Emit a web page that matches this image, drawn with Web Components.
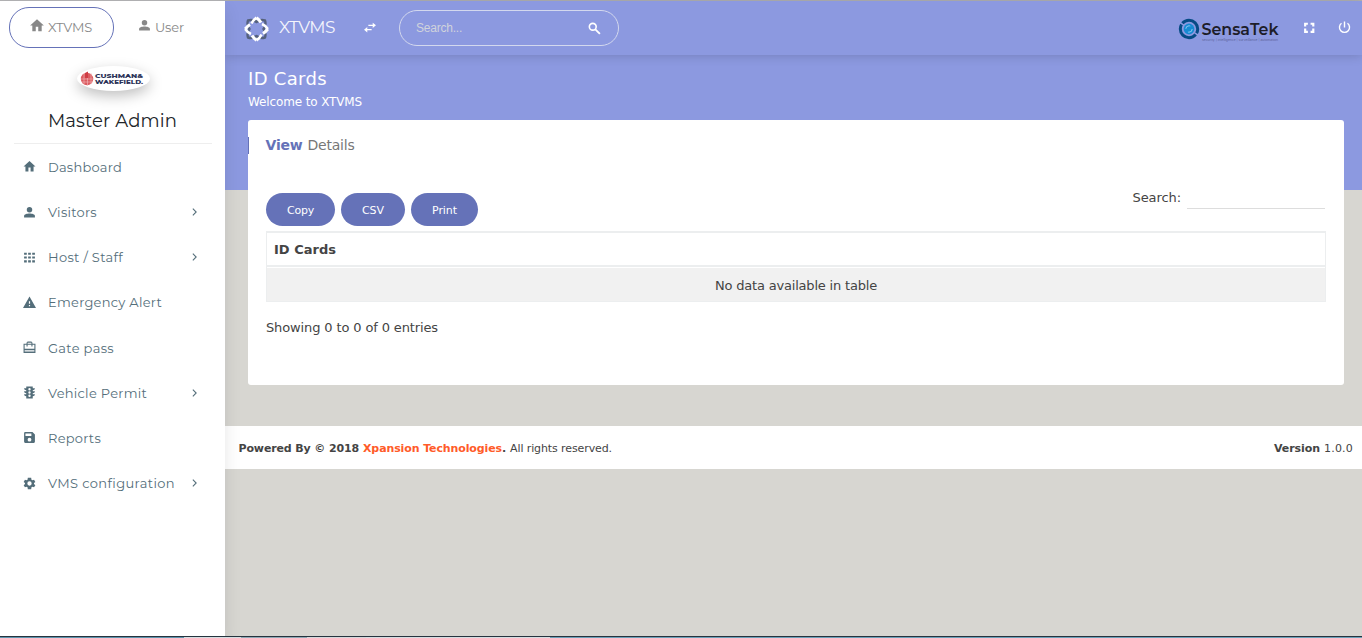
<!DOCTYPE html>
<html lang="en">
<head>
<meta charset="utf-8">
<title>XTVMS - ID Cards</title>
<style>
    html, body {
        height: 100%;
    }

    body {
        margin: 0;
        overflow: hidden;
        font-family: Verdana, "DejaVu Sans", sans-serif;
        font-size: 13px;
        color: #444;
        background: #d7d6d1;
    }
</style>
</head>
<body>
<vms-app>
    <vms-sidebar slot="sidebar"></vms-sidebar>
    <vms-topbar slot="main"></vms-topbar>
    <vms-page slot="main" heading="ID Cards" sub="Welcome to XTVMS">
        <vms-card>
            <fit-text slot="strong" w="37">View</fit-text>
            <fit-text slot="title" w="47">Details</fit-text>
            <vms-table></vms-table>
        </vms-card>
    </vms-page>
    <vms-footer slot="main"></vms-footer>
</vms-app>

<script>
const ICONS = {
    home: '<path d="M10 21v-7h4v7h5.500v-9H23L12 2 1 12h3.500v9z"/>',
    user: '<circle cx="12" cy="7" r="5"/><path d="M2 21v-2.500c0-3 6-4.500 10-4.500s10 1.500 10 4.500V21z"/>',
    apps: '<path d="M2 3h5v4H2zM9.500 3h5v4h-5zM17 3h5v4h-5zM2 10h5v4H2zM9.500 10h5v4h-5zM17 10h5v4h-5zM2 17h5v4H2zM9.500 17h5v4h-5zM17 17h5v4h-5z"/>',
    alert: '<path fill-rule="evenodd" d="M0 22h24L12 1zM10.900 9.500h2.200v5h-2.200zM10.900 16.500h2.200v2.500h-2.200z"/>',
    caseIcon: '<path fill-rule="evenodd" d="M17.500 5V3l-2-2h-7l-2 2v2H1v17h22V5zM8.500 3h7v2h-7zM3 7h3.500v3h2V7h7v3h2V7H21v7.500H3zM3 17h18v2.500H3z"/>',
    traffic: '<path fill-rule="evenodd" d="M22 9.500h-4V8c2.200-.5 4-2 4-4h-4V1H6v3H2c0 2 1.800 3.500 4 4v1.500H2c0 2 1.800 3.500 4 4V15H2c0 2 1.800 3.500 4 4v4h12v-4c2.200-.5 4-2 4-4h-4v-1.500c2.200-.5 4-2 4-4zM12 3.700a2.200 2.200 0 1 1 0 4.400 2.200 2.200 0 0 1 0-4.400zM12 9.800a2.200 2.200 0 1 1 0 4.400 2.200 2.200 0 0 1 0-4.400zM12 15.900a2.200 2.200 0 1 1 0 4.400 2.200 2.200 0 0 1 0-4.400z"/>',
    save: '<path fill-rule="evenodd" d="M17.500 2H4a2 2 0 0 0-2 2v16a2 2 0 0 0 2 2h16a2 2 0 0 0 2-2V6.500zM12 19.500a3.500 3.500 0 1 1 0-7 3.500 3.500 0 0 1 0 7zM15.500 9H4.500V4.500h11z"/>',
    gear: '<path fill-rule="evenodd" d="M20.300 13.100a8 8 0 0 0 0-2.200l2.500-1.900-2.400-4.100-2.900 1.200a8 8 0 0 0-1.900-1.100L15.100 1.500H8.900l-.5 3.500a8 8 0 0 0-1.900 1.100L3.600 4.900 1.200 9l2.500 1.900a8 8 0 0 0 0 2.200L1.200 15l2.400 4.100 2.900-1.200a8 8 0 0 0 1.900 1.100l.5 3.500h6.200l.5-3.500a8 8 0 0 0 1.900-1.100l2.900 1.200 2.400-4.100zM12 16a4 4 0 1 1 0-8 4 4 0 0 1 0 8z"/>',
    chevron: '<path d="M8 4l8 8-8 8" fill="none" stroke="currentColor" stroke-width="2.600"/>',
    swap: '<path d="M1 16l6-5v3.700h8v2.600H7V21zM23 8l-6-5v3.700H9v2.600h8V13z"/>',
    search: '<circle cx="8.800" cy="8.800" r="6.300" fill="none" stroke="currentColor" stroke-width="3"/><path d="M13.500 13.500L22 22" stroke="currentColor" stroke-width="3.500"/>',
    full: '<path d="M2 3h7v4H6v3H2zM14 3h7v7h-4V7h-3zM2 14h4v4h3v4H2zM17 14h4v8h-7v-4h3z"/>',
    power: '<path d="M12 1v11M6.500 4.200a9.300 9.300 0 1 0 11 0" fill="none" stroke="currentColor" stroke-width="2.600"/>'
};

class VmsIcon extends HTMLElement {
    connectedCallback() {
        this.attachShadow({ mode: 'open' }).innerHTML = `
            <style>
                :host {
                    display: block;
                    flex: none;
                    width: 13px;
                    height: 13px;
                }

                svg {
                    display: block;
                    width: 100%;
                    height: 100%;
                }
            </style>
            <svg viewBox="0 0 24 24" fill="currentColor">${ICONS[this.getAttribute('name')]}</svg>
        `;
    }
}

class VmsApp extends HTMLElement {
    connectedCallback() {
        this.attachShadow({ mode: 'open' }).innerHTML = `
            <style>
                :host {
                    display: flex;
                    flex-direction: column;
                    height: 638px;
                    box-sizing: border-box;
                    border-top: 1px solid #b2b2b4;
                }

                .wrap {
                    display: flex;
                    flex: 1;
                }

                main {
                    flex: 1;
                    min-width: 0;
                }

                .strip {
                    height: 2px;
                    box-sizing: border-box;
                    border-top: 1px solid #26333e;
                    background: linear-gradient(90deg, #5d94ad 0 184px, #d5dde0 184px 241px, #8fa9b5 241px 307px, #d5d8da 307px 366px, #d5dde0 366px 550px, #6ba0b8 550px);
                    position: relative;
                    z-index: 3;
                }
            </style>
            <div class="wrap">
                <slot name="sidebar"></slot>
                <main><slot name="main"></slot></main>
            </div>
            <div class="strip"></div>
        `;
    }
}

class VmsSidebar extends HTMLElement {
    connectedCallback() {
        const items = [
            ['home', 'Dashboard', 74],
            ['user', 'Visitors', 49, true],
            ['apps', 'Host / Staff', 75, true],
            ['alert', 'Emergency Alert', 114],
            ['caseIcon', 'Gate pass', 66],
            ['traffic', 'Vehicle Permit', 99, true],
            ['save', 'Reports', 53],
            ['gear', 'VMS configuration', 127, true]
        ];

        this.attachShadow({ mode: 'open' }).innerHTML = `
            <style>
                :host {
                    display: block;
                    width: 225px;
                    flex: none;
                    background: #fff;
                    box-shadow: 0 8px 16px rgba(0, 0, 0, .1);
                    position: relative;
                    z-index: 2;
                    font-family: Montserrat, Inter, sans-serif;
                    font-weight: 400;
                }

                .tabs {
                    display: flex;
                    align-items: center;
                    padding: 6px 0 0 9px;
                    color: #888;
                    font-size: 13px;
                }

                .tab {
                    display: flex;
                    align-items: center;
                    gap: 4px;
                    height: 41px;
                    box-sizing: border-box;
                    padding: 0 20px 2px;
                }

                .tab.active {
                    gap: 3px;
                    width: 105px;
                    padding-left: 19px;
                    border: 1px solid #6572b8;
                    border-radius: 20px;
                }

                .tab:last-child {
                    padding-left: 24px;
                }

                .tab vms-icon {
                    margin-top: -3px;
                }

                .info {
                    display: flex;
                    flex-direction: column;
                    align-items: center;
                    margin: 0 13px 0 14px;
                    height: 95px;
                    border-bottom: 1px solid #eee;
                }

                .logo {
                    width: 73px;
                    height: 25px;
                    margin-top: 18px;
                    border-radius: 50%;
                    background: #fff;
                    box-shadow: 0 5px 14px rgba(0, 0, 0, .25);
                }

                .name {
                    margin: 18px 1px 0 0;
                    font-size: 18px;
                    line-height: 24px;
                    color: #212529;
                }

                ul {
                    list-style: none;
                    margin: 0;
                    padding: .4px 0 0;
                }

                li {
                    display: flex;
                    align-items: center;
                    height: 45.170px;
                    padding: 0 25.500px 0 23px;
                    color: #546e7a;
                    font-size: 13px;
                }

                li fit-text {
                    margin-left: 12px;
                    margin-right: auto;
                }

                li .arrow {
                    width: 11px;
                    height: 10px;
                }
            </style>
            <div class="tabs">
                <div class="tab active"><vms-icon name="home" style="width:16px;height:15px"></vms-icon><fit-text w="44">XTVMS</fit-text></div>
                <div class="tab"><vms-icon name="user"></vms-icon><fit-text w="29">User</fit-text></div>
            </div>
            <div class="info">
                <svg class="logo" viewBox="0 0 73 25">
                    <circle cx="10" cy="13" r="6.200" fill="#db5b60"/>
                    <path d="M7 7v11M10.500 6v14M14 7v11M4 13h13M5 16h11" stroke="#f4b9bb" stroke-width=".6"/>
                    <path d="M8 12V7l3-1.500V12z" fill="#cf3d44"/>
                    <text x="18" y="11.700" font-family="Montserrat, Inter, sans-serif" font-weight="800" font-size="6" fill="#2c3358" textLength="48" lengthAdjust="spacingAndGlyphs">CUSHMAN&amp;</text>
                    <text x="18" y="18.200" font-family="Montserrat, Inter, sans-serif" font-weight="800" font-size="6" fill="#2c3358" textLength="48" lengthAdjust="spacingAndGlyphs">WAKEFIELD.</text>
                </svg>
                <div class="name"><fit-text w="129">Master Admin</fit-text></div>
            </div>
            <ul>${items.map(([icon, label, w, arrow]) => `
                <li><vms-icon name="${icon}"></vms-icon><fit-text w="${w}">${label}</fit-text>${arrow ? '<vms-icon class="arrow" name="chevron"></vms-icon>' : ''}</li>`).join('')}
            </ul>
        `;
    }
}

class VmsTopbar extends HTMLElement {
    connectedCallback() {
        this.attachShadow({ mode: 'open' }).innerHTML = `
            <style>
                :host {
                    display: flex;
                    align-items: center;
                    height: 54px;
                    box-sizing: border-box;
                    padding: 0 11px 0 18px;
                    background: #8c99e0;
                    color: #fff;
                    box-shadow: 0 1px 10px rgba(0, 0, 0, .16);
                    position: relative;
                    z-index: 1;
                }

                .knot {
                    width: 26px;
                    height: 26px;
                    margin-top: 1px;
                }

                .brand {
                    margin: -2px 28px 0 10px;
                    font: 400 17px Montserrat, Inter, sans-serif;
                    color: #f4f5fc;
                }

                .swap {
                    width: 14px;
                    height: 13px;
                    margin-top: -2px;
                }

                .search {
                    display: flex;
                    align-items: center;
                    justify-content: space-between;
                    width: 220px;
                    height: 36px;
                    box-sizing: border-box;
                    margin-left: 22px;
                    padding: 0 17px 0 16px;
                    border: 1px solid #d3d8ee;
                    border-radius: 18px;
                    font: 12px "Liberation Sans", Arial, sans-serif;
                    color: #d0d3dc;
                }

                .search vms-icon {
                    color: #fff;
                }

                .sensatek {
                    width: 110px;
                    height: 34px;
                    overflow: visible;
                    margin: 2px 16px 0 auto;
                }

                .full, .power {
                    margin-top: -2px;
                }

                .power {
                    margin-left: 22px;
                }
            </style>
            <svg class="knot" viewBox="-13.500 -13 26 26" fill="none" stroke-linejoin="round">
                <path d="M-8.500-8.500Q-4-10 0-7Q4-10 8.500-8.500Q10-4 7 0Q10 4 8.500 8.500Q4 10 0 7Q-4 10-8.500 8.500Q-10 4-7 0Q-10-4-8.500-8.500z" stroke="#55617d" stroke-width="2.400"/>
                <path d="M0-11.300Q3-9 4.500-6.500M11.300 0Q9 3 6.500 4.500M0 11.300Q-3 9-4.500 6.500M-11.300 0Q-9-3-6.500-4.500" stroke="#fff" stroke-width="3"/>
                <path d="M0-11.300Q-3.500-9-5-5.500M11.300 0Q9-3.500 5.500-5M0 11.300Q3.500 9 5 5.500M-11.300 0Q-9 3.500-5.500 5" stroke="#fff" stroke-width="2.600"/>
            </svg>
            <div class="brand"><fit-text w="56">XTVMS</fit-text></div>
            <vms-icon name="swap" class="swap"></vms-icon>
            <div class="search"><fit-text w="46">Search...</fit-text><vms-icon name="search"></vms-icon></div>
            <svg class="sensatek" viewBox="0 -3 110 34">
                <circle cx="12" cy="14" r="8.700" fill="none" stroke="#064b85" stroke-width="3" stroke-dasharray="25.800 1.500" stroke-dashoffset="-6"/>
                <circle cx="12" cy="14" r="5.400" fill="#168ad2"/>
                <circle cx="12" cy="14" r="3.200" fill="none" stroke="#8cc7f2" stroke-width="1" stroke-dasharray="6 4"/>
                <text x="24.500" y="20" font-family="Montserrat, Inter, sans-serif" font-weight="600" font-size="17" fill="#1d1d29" textLength="77" lengthAdjust="spacingAndGlyphs">SensaTek</text>
                <text x="25" y="26.300" font-family="Inter, sans-serif" font-size="3" fill="#5c6299" textLength="76" lengthAdjust="spacingAndGlyphs">security | intelligence | surveillance | automation</text>
            </svg>
            <vms-icon name="full" class="full"></vms-icon>
            <vms-icon name="power" class="power"></vms-icon>
        `;
    }
}

class VmsPage extends HTMLElement {
    connectedCallback() {
        this.attachShadow({ mode: 'open' }).innerHTML = `
            <style>
                :host {
                    display: block;
                    height: 371px;
                    box-sizing: border-box;
                    padding: 13px 18px 0 23px;
                    background: linear-gradient(#8c99e0 0 135px, transparent 135px);
                }

                h2 {
                    margin: 0;
                    font-size: 18px;
                    line-height: 22px;
                    font-weight: 400;
                    color: #fff;
                }

                .sub {
                    height: 30px;
                    font-size: 12px;
                    line-height: 25px;
                    color: #fff;
                }
            </style>
            <h2><fit-text w="79">${this.getAttribute('heading')}</fit-text></h2>
            <div class="sub"><fit-text w="114">${this.getAttribute('sub')}</fit-text></div>
            <slot></slot>
        `;
    }
}

class VmsCard extends HTMLElement {
    connectedCallback() {
        this.attachShadow({ mode: 'open' }).innerHTML = `
            <style>
                :host {
                    display: block;
                    height: 265px;
                    box-sizing: border-box;
                    padding: 17px 19px 0 0;
                    background: #fff;
                    border-radius: 3px;
                }

                header {
                    display: flex;
                    gap: 5px;
                    align-items: center;
                    height: 17px;
                    box-sizing: border-box;
                    padding: 0 0 2px 16.500px;
                    border-left: 1px solid #6572b8;
                    font-size: 14px;
                    color: #777;
                }

                b {
                    color: #6572b8;
                }

                .body {
                    padding: 39px 0 0 18px;
                }
            </style>
            <header><b><slot name="strong"></slot></b><slot name="title"></slot></header>
            <div class="body"><slot></slot></div>
        `;
    }
}

class VmsTable extends HTMLElement {
    connectedCallback() {
        this.attachShadow({ mode: 'open' }).innerHTML = `
            <style>
                :host {
                    display: block;
                }

                .tools {
                    display: flex;
                    gap: 6px;
                    height: 38px;
                }

                button {
                    height: 33px;
                    padding: 1px 0 0;
                    border: none;
                    border-radius: 17px;
                    background: #6572b8;
                    color: #fff;
                    font: 11px Verdana, "DejaVu Sans", sans-serif;
                }

                label {
                    display: flex;
                    gap: 6px;
                    height: 16px;
                    margin-left: auto;
                    line-height: 10px;
                }

                input {
                    width: 138px;
                    height: 16px;
                    box-sizing: border-box;
                    border: none;
                    border-bottom: 1px solid #ddd;
                    padding: 0;
                }

                table {
                    width: calc(100% + 1px);
                    height: 71px;
                    box-sizing: border-box;
                    border: 1px solid #eceeef;
                    border-collapse: separate;
                    border-spacing: 0;
                }

                th {
                    height: 35px;
                    box-sizing: border-box;
                    padding: 0 7px;
                    text-align: left;
                    border-top: 1px solid #eceeef;
                    border-bottom: 2px solid #eceeef;
                }

                td {
                    height: 34px;
                    box-sizing: border-box;
                    padding: 1px 0 0;
                    text-align: center;
                    background: #f1f1f1;
                    border-top: 1px solid #fff;
                }

                .count {
                    margin-top: 17px;
                    line-height: 18px;
                }
            </style>
            <div class="tools">
                <button style="width:69px"><fit-text w="27">Copy</fit-text></button>
                <button style="width:64px"><fit-text w="22">CSV</fit-text></button>
                <button style="width:67px"><fit-text w="25">Print</fit-text></button>
                <label><fit-text w="48.500">Search:</fit-text><input></label>
            </div>
            <table>
                <tr><th><fit-text w="62">ID Cards</fit-text></th></tr>
                <tr><td><fit-text w="162">No data available in table</fit-text></td></tr>
            </table>
            <div class="count"><fit-text w="172">Showing 0 to 0 of 0 entries</fit-text></div>
        `;
    }
}

class VmsFooter extends HTMLElement {
    connectedCallback() {
        this.attachShadow({ mode: 'open' }).innerHTML = `
            <style>
                :host {
                    display: flex;
                    align-items: center;
                    gap: 4px;
                    height: 43px;
                    box-sizing: border-box;
                    padding: 2px 9px 0 13.500px;
                    background: #fff;
                    font-size: 11px;
                }

                a {
                    color: #ff5b29;
                }

                .version {
                    display: flex;
                    gap: 4px;
                    margin-left: auto;
                }
            </style>
            <b><fit-text w="120.500">Powered By © 2018</fit-text></b>
            <b><a><fit-text w="139">Xpansion Technologies</fit-text></a><fit-text w="4">.</fit-text></b>
            <fit-text w="102">All rights reserved.</fit-text>
            <span class="version"><b><fit-text w="46">Version</fit-text></b><fit-text w="29">1.0.0</fit-text></span>
        `;
    }
}

// Tracks the letters so that the label is w pixels wide in any fallback font
class FitText extends HTMLElement {
    connectedCallback() {
        this.attachShadow({ mode: 'open' }).innerHTML = `
            <style>
                :host {
                    display: inline-block;
                    white-space: nowrap;
                }
            </style>
            <slot></slot>
        `;
        const gap = Number(this.getAttribute('w')) - this.getBoundingClientRect().width;
        this.style.letterSpacing = (gap / this.textContent.length) + 'px';
    }
}

customElements.define('vms-icon', VmsIcon);
customElements.define('vms-app', VmsApp);
customElements.define('vms-sidebar', VmsSidebar);
customElements.define('vms-topbar', VmsTopbar);
customElements.define('vms-page', VmsPage);
customElements.define('vms-card', VmsCard);
customElements.define('vms-table', VmsTable);
customElements.define('vms-footer', VmsFooter);
// last, so that every label is already laid out when it is measured
customElements.define('fit-text', FitText);
</script>
</body>
</html>
